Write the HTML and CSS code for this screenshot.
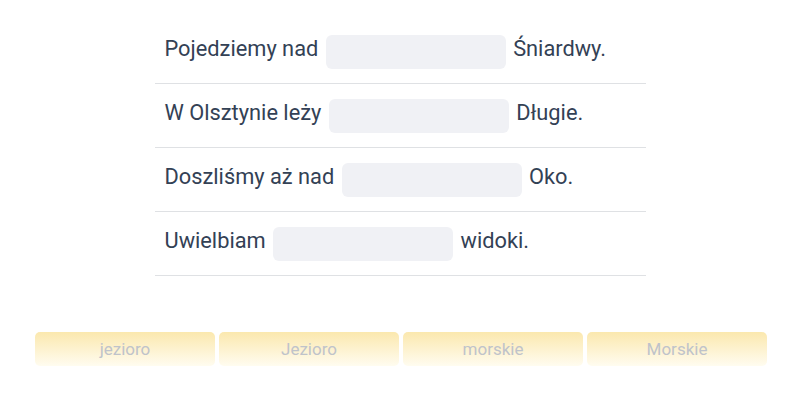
FILE: index.html
```html
<!DOCTYPE html>
<html lang="pl">
<head>
    <meta charset="UTF-8">
    <meta name="viewport" content="width=device-width, initial-scale=1.0">
    <title>Uzupełnij zdania</title>
    <link rel="stylesheet" href="styles.css">
</head>
<body>

    <div class="exercise">
        <ul class="sentences">
            <li class="sentence">Pojedziemy nad <span class="blank"></span> Śniardwy.</li>
            <li class="sentence">W Olsztynie leży <span class="blank"></span> Długie.</li>
            <li class="sentence">Doszliśmy aż nad <span class="blank"></span> Oko.</li>
            <li class="sentence">Uwielbiam <span class="blank"></span> widoki.</li>
        </ul>

        <div class="options">
            <button class="option">jezioro</button>
            <button class="option">Jezioro</button>
            <button class="option">morskie</button>
            <button class="option">Morskie</button>
        </div>
    </div>

</body>
</html>
```

FILE: styles.css
```css
body {
    font-family: Roboto, 'Liberation Sans', sans-serif;
    margin: 0;
    padding: 0;
    background: #ffffff;
    color: #334155;
}
.exercise {
    display: flex;
    flex-direction: column;
    align-items: center;
    padding-top: 20px;
}
.sentences {
    list-style: none;
    margin: 0;
    padding: 0;
    width: 491px;
}
.sentence {
    display: flex;
    align-items: center;
    height: 56px;
    padding: 0 0 7px 10px;
    border-bottom: 1px solid #dfe1e4;
    font-size: 21.8px;
    white-space: pre;
}
.blank {
    display: inline-block;
    width: 180px;
    height: 34px;
    margin: 7px 2px 0;
    background-color: #f0f1f5;
    border-radius: 6px;
}
.options {
    display: flex;
    gap: 4px;
    margin-top: 56px;
    margin-left: 2px;
}
.option {
    width: 180px;
    height: 34px;
    border: none;
    border-radius: 5px;
    background: linear-gradient(180deg, #fbe8ae, #fffcf0);
    color: #bfc3ca;
    font-family: Roboto, 'Liberation Sans', sans-serif;
    font-size: 17px;
    cursor: pointer;
}
```
